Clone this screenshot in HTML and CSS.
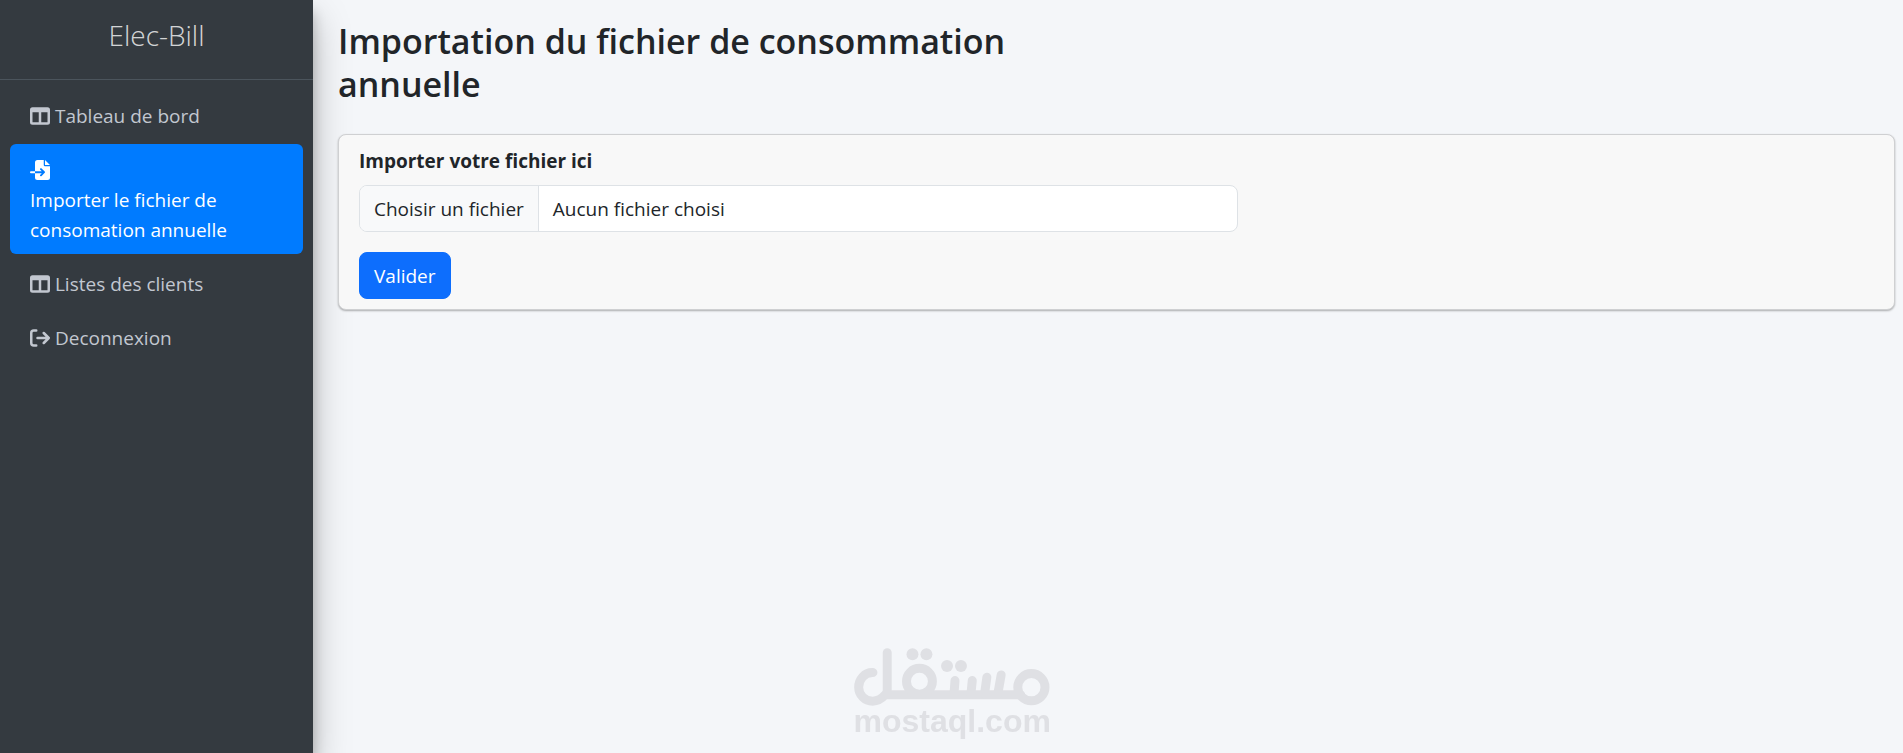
FILE: index.html
```html
<!DOCTYPE html>
<html lang="fr">
<head>
    <meta charset="UTF-8">
    <meta name="viewport" content="width=device-width, initial-scale=1.0">
    <title>Elec-Bill</title>
    <link rel="stylesheet" href="styles.css">
</head>
<body>
    <div class="wrapper">
        <aside class="sidebar">
            <a href="#" class="brand">Elec-Bill</a>
            <nav class="nav">
                <a href="#" class="nav-link">
                    <svg class="icon" viewBox="0 0 512 512"><path fill-rule="evenodd" d="M64 32h384a64 64 0 0 1 64 64v320a64 64 0 0 1-64 64H64a64 64 0 0 1-64-64V96a64 64 0 0 1 64-64zM64 160v256h160V160zM288 160v256h160V160z"/></svg>
                    <span>Tableau de bord</span>
                </a>
                <a href="#" class="nav-link active">
                    <svg class="icon" viewBox="0 0 512 512"><path fill-rule="evenodd" d="M128 64a64 64 0 0 1 64-64h160v128a32 32 0 0 0 32 32h128v288a64 64 0 0 1-64 64H192a64 64 0 0 1-64-64V336h174l-39 39a24 24 0 0 0 34 34l80-80a24 24 0 0 0 0-34l-80-80a24 24 0 0 0-34 34l39 39H128zM24 288h104v48H24a24 24 0 0 1 0-48zM512 128H384V0z"/></svg>
                    <span class="nav-text">Importer le fichier de consomation annuelle</span>
                </a>
                <a href="#" class="nav-link">
                    <svg class="icon" viewBox="0 0 512 512"><path fill-rule="evenodd" d="M64 32h384a64 64 0 0 1 64 64v320a64 64 0 0 1-64 64H64a64 64 0 0 1-64-64V96a64 64 0 0 1 64-64zM64 160v256h160V160zM288 160v256h160V160z"/></svg>
                    <span>Listes des clients</span>
                </a>
                <a href="#" class="nav-link">
                    <svg class="icon icon-line" viewBox="0 0 512 512"><path d="M160 64H96a64 64 0 0 0-64 64v256a64 64 0 0 0 64 64h64M192 256h280M352 128l128 128-128 128"/></svg>
                    <span>Deconnexion</span>
                </a>
            </nav>
        </aside>

        <main class="content">
            <div class="content-header">
                <h1>Importation du fichier de consommation annuelle</h1>
            </div>

            <form class="card">
                <label for="fichier" class="form-label">Importer votre fichier ici</label>
                <div class="file-control">
                    <span class="file-button">Choisir un fichier</span>
                    <span class="file-name">Aucun fichier choisi</span>
                    <input type="file" id="fichier" name="fichier">
                </div>
                <button type="submit" class="btn">Valider</button>
            </form>
        </main>
    </div>

    <div class="watermark">
        <svg class="watermark-logo" viewBox="38 38 590 174">
            <g fill="none" stroke="#dfe0e4" stroke-width="27" stroke-linecap="round">
                <path d="M95 112C69 111 52 133 52 156a42 42 0 0 0 42 42C112 198 122 190 132 179H540"/>
                <path d="M138 52V176"/>
                <circle cx="235" cy="138" r="39"/>
                <path d="M342 136L339 176M394 136L390 176M438 126L431 176M481 119L471 176"/>
                <circle cx="572" cy="156" r="41"/>
            </g>
            <g fill="#dfe0e4">
                <circle cx="214" cy="57" r="18"/>
                <circle cx="256" cy="57" r="18"/>
                <circle cx="318" cy="92" r="18"/>
                <circle cx="360" cy="92" r="18"/>
            </g>
        </svg>
        <span>mostaql.com</span>
    </div>

    <script>
        const input = document.getElementById('fichier');
        const fileName = document.querySelector('.file-name');

        input.addEventListener('change', () => {
            fileName.textContent = input.files.length ? input.files[0].name : 'Aucun fichier choisi';
        });
    </script>
</body>
</html>
```
FILE: styles.css
```css
:root {
    --sidebar-bg: #343a40;
    --sidebar-text: #c2c7d0;
    --active: #007bff;
    --primary: #0d6efd;
    --text-color: #212529;
    --border: #dee2e6;
}

* {
    box-sizing: border-box;
    margin: 0;
    padding: 0;
}

body {
    background-color: #f4f6f9;
    color: var(--text-color);
    font-family: "Segoe UI", "Open Sans", sans-serif;
    font-size: 19px;
    line-height: 30px;
}

.wrapper {
    display: flex;
    min-height: 100vh;
}

.sidebar {
    flex: 0 0 313px;
    background: var(--sidebar-bg);
    box-shadow: 0 18px 35px rgba(0,0,0,0.25), 0 12px 12px rgba(0,0,0,0.22);
}

.brand {
    display: block;
    padding: 20px 10px 29px;
    border-bottom: 1px solid #4b545c;
    color: rgba(255,255,255,0.8);
    font-size: 28px;
    font-weight: 300;
    text-align: center;
    text-decoration: none;
}

.nav {
    display: flex;
    flex-direction: column;
    gap: 4px;
    padding: 10px;
}

.nav-link {
    padding: 11px 20px 9px;
    border-radius: 6px;
    color: var(--sidebar-text);
    text-decoration: none;
}

.nav-link.active {
    background: var(--active);
    color: #fff;
}

.nav-text {
    display: block;
}

.icon {
    width: 20px;
    height: 20px;
    fill: currentColor;
    vertical-align: -3px;
}

.icon-line {
    fill: none;
    stroke: currentColor;
    stroke-width: 64;
    stroke-linecap: round;
    stroke-linejoin: round;
}

.content {
    flex: 1;
    min-width: 0;
    padding: 20px 8px 20px 25px;
}

.content-header {
    width: 50%;
    margin-bottom: 28px;
}

h1 {
    font-size: 34px;
    font-weight: 600;
    line-height: 43px;
}

.card {
    padding: 11px 20px 10px;
    background: #f8f8f8;
    border: 1px solid #cfd0d2;
    border-radius: 8px;
    box-shadow: 0 1px 2px rgba(0,0,0,0.3);
}

.form-label {
    display: block;
    margin-bottom: 9px;
    font-weight: 700;
}

.file-control {
    position: relative;
    display: flex;
    width: 58%;
    margin-bottom: 20px;
    background: #fff;
    border: 1px solid var(--border);
    border-radius: 8px;
    overflow: hidden;
}

.file-control input {
    position: absolute;
    inset: 0;
    width: 100%;
    opacity: 0;
    cursor: pointer;
}

.file-button,
.file-name {
    padding: 8px 14px 7px;
}

.file-button {
    background: #f8f9fa;
    border-right: 1px solid var(--border);
}

.btn {
    padding: 8px 14px 7px;
    background: var(--primary);
    border: 1px solid var(--primary);
    border-radius: 8px;
    color: #fff;
    font: inherit;
    cursor: pointer;
}

.watermark {
    position: fixed;
    bottom: 17px;
    left: 50%;
    width: 196px;
    margin-left: -98px;
    color: #dfe0e4;
    font-family: "Liberation Sans", Arial, sans-serif;
    font-size: 32px;
    font-weight: 700;
    text-align: center;
    pointer-events: none;
}

.watermark-logo {
    display: block;
    width: 100%;
}
```
